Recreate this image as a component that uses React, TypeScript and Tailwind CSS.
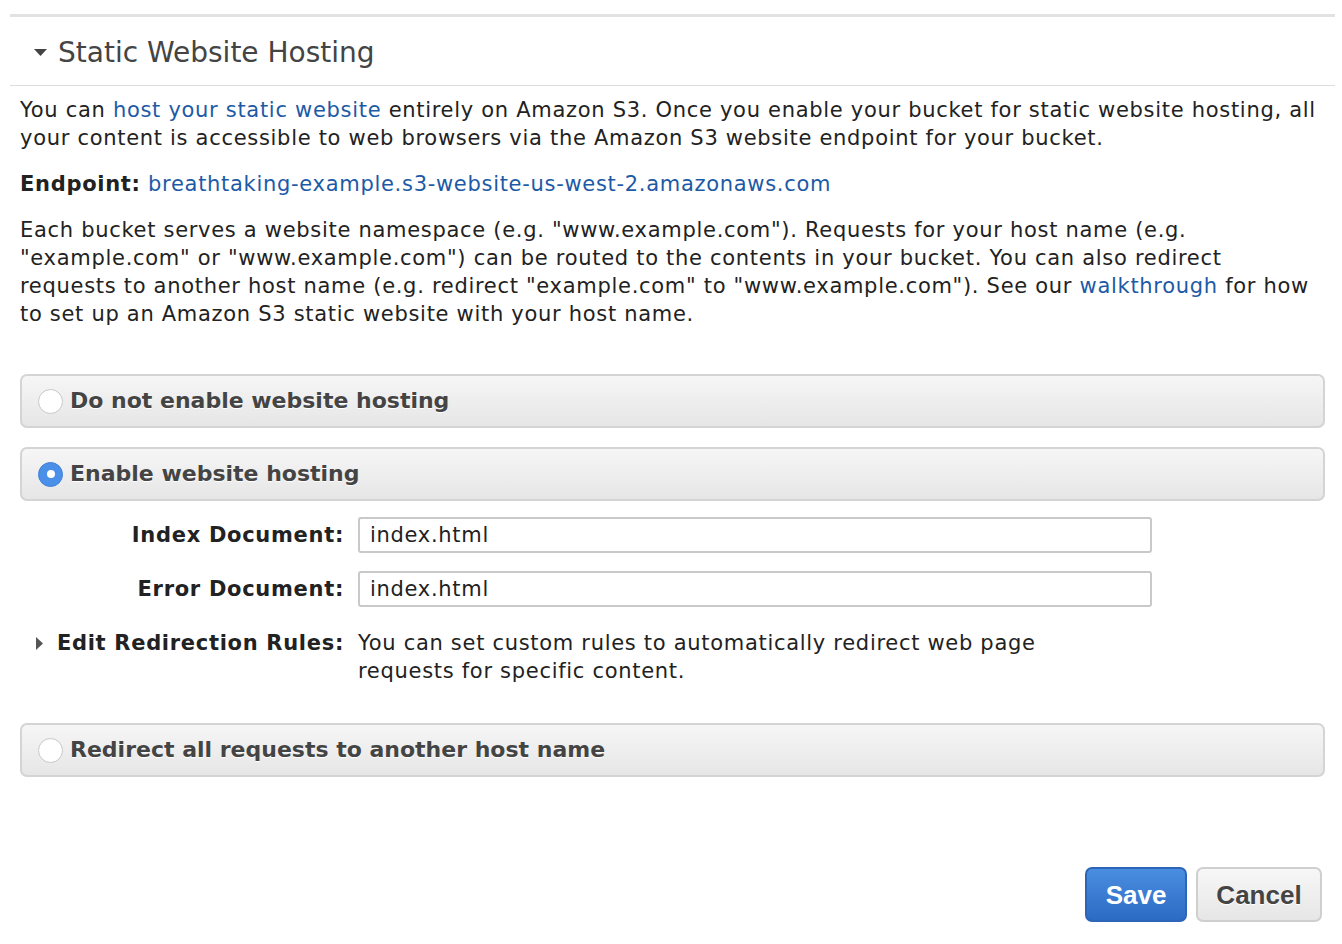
import React from "react";

const Radio = ({ checked }: { checked?: boolean }) =>
  checked ? (
    <span className="w-[25px] h-[25px] rounded-full bg-[#4a90e8] border border-[#3f80d8] flex items-center justify-center shrink-0">
      <span className="w-[8px] h-[8px] rounded-full bg-white" />
    </span>
  ) : (
    <span className="w-[25px] h-[25px] rounded-full bg-white border border-[#c8c8c8] shrink-0" />
  );

const Option = ({ label, checked }: { label: string; checked?: boolean }) => (
  <div className="h-[54px] rounded-[7px] border-2 border-[#d4d4d4] bg-gradient-to-b from-[#f6f6f6] to-[#e6e6e6] flex items-center pl-[16px] gap-[7px]">
    <Radio checked={checked} />
    <span className="font-bold text-[22px] text-[#444] tracking-normal [text-shadow:0_1px_0_#fff]">{label}</span>
  </div>
);

export default function App() {
  return (
    <div className="w-[1342px] h-[944px] bg-white text-[#222] [font-family:'DejaVu_Sans',Verdana,sans-serif] text-[21px] leading-[28px] tracking-[0.7px] pt-[14px] pl-[10px] pr-[7px]">
      <div className="h-[3px] bg-[#e2e2e2]" />
      <div className="flex items-center h-[69px] pt-[3px] border-b border-[#ddd] pl-[24px]">
        <svg width="13" height="8" viewBox="0 0 13 8" className="mr-[11px] mt-[1px]">
          <path d="M0 0 L13 0 L6.5 7 Z" fill="#444" />
        </svg>
        <span className="text-[28px] text-[#444] tracking-normal">Static Website Hosting</span>
      </div>
      <div className="pl-[10px]">
        <div className="pr-[14px]">
          <p className="mt-[10px]">
            You can <span className="text-[#1d5aa6]">host your static website</span> entirely on Amazon S3. Once you enable your bucket for static website hosting, all your content is accessible to web browsers via the Amazon S3 website endpoint for your bucket.
          </p>
          <p className="mt-[18px]">
            <span className="font-bold">Endpoint:</span>{" "}
            <span className="text-[#1d5aa6]">breathtaking-example.s3-website-us-west-2.amazonaws.com</span>
          </p>
          <p className="mt-[18px]">
            Each bucket serves a website namespace (e.g. "www.example.com"). Requests for your host name (e.g. "example.com" or "www.example.com") can be routed to the contents in your bucket. You can also redirect requests to another host name (e.g. redirect "example.com" to "www.example.com"). See our <span className="text-[#1d5aa6]">walkthrough</span> for how to set up an Amazon S3 static website with your host name.
          </p>
        </div>
        <div className="mt-[46px] pr-[10px]">
          <Option label="Do not enable website hosting" />
          <div className="mt-[19px]">
            <Option label="Enable website hosting" checked />
          </div>
          <div className="mt-[16px] flex flex-col gap-[18px]">
            <div className="flex items-center">
              <span className="w-[324px] text-right font-bold">Index Document:</span>
              <div className="ml-[14px] w-[794px] h-[36px] border-2 border-[#c9c9c9] rounded-[3px] flex items-center pl-[10px]">index.html</div>
            </div>
            <div className="flex items-center">
              <span className="w-[324px] text-right font-bold">Error Document:</span>
              <div className="ml-[14px] w-[794px] h-[36px] border-2 border-[#c9c9c9] rounded-[3px] flex items-center pl-[10px]">index.html</div>
            </div>
            <div className="flex items-start mt-[4px]">
              <div className="w-[324px] flex items-center justify-end">
                <svg width="8" height="13" viewBox="0 0 8 13" className="mr-[auto] ml-[16px]">
                  <path d="M0 0 L7 6.5 L0 13 Z" fill="#555" />
                </svg>
                <span className="font-bold">Edit Redirection Rules:</span>
              </div>
              <p className="ml-[14px] w-[700px]">You can set custom rules to automatically redirect web page requests for specific content.</p>
            </div>
          </div>
          <div className="mt-[38px]">
            <Option label="Redirect all requests to another host name" />
          </div>
        </div>
        <div className="flex justify-end gap-[9px] mt-[90px] pr-[13px] tracking-normal [font-family:'Liberation_Sans',Arial,sans-serif]">
          <button className="w-[102px] h-[55px] rounded-[7px] border-2 border-[#2d65b8] bg-gradient-to-b from-[#4a8ee0] to-[#2c6bc4] text-white font-bold text-[26px]">Save</button>
          <button className="w-[126px] h-[55px] rounded-[7px] border-2 border-[#cfcfcf] bg-gradient-to-b from-[#f7f7f7] to-[#e6e6e6] text-[#444] font-bold text-[26px] [text-shadow:0_1px_0_#fff]">Cancel</button>
        </div>
      </div>
    </div>
  );
}
